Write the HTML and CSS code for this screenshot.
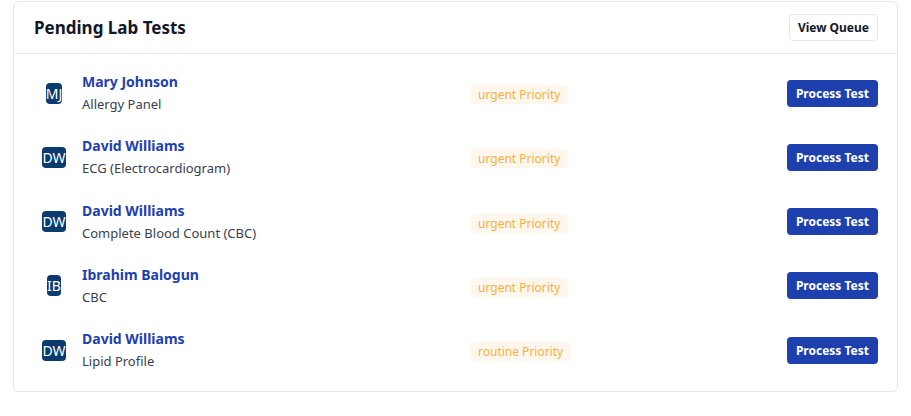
FILE: index.html
```html
<!DOCTYPE html>
<html>
<head>
<meta charset="utf-8">
<link rel="stylesheet" href="styles.css">
</head>
<body>
<div class="card">
  <div class="card-header">
    <h2 class="title">Pending Lab Tests</h2>
    <button class="btn-outline">View Queue</button>
  </div>
  <div class="list">
    <div class="row">
      <div class="avatar-cell"><span class="avatar">MJ</span></div>
      <div class="info">
        <div class="name">Mary Johnson</div>
        <div class="test">Allergy Panel</div>
      </div>
      <div class="badge-cell"><span class="badge">urgent Priority</span></div>
      <button class="btn-primary">Process Test</button>
    </div>
    <div class="row">
      <div class="avatar-cell"><span class="avatar">DW</span></div>
      <div class="info">
        <div class="name">David Williams</div>
        <div class="test">ECG (Electrocardiogram)</div>
      </div>
      <div class="badge-cell"><span class="badge">urgent Priority</span></div>
      <button class="btn-primary">Process Test</button>
    </div>
    <div class="row">
      <div class="avatar-cell"><span class="avatar">DW</span></div>
      <div class="info">
        <div class="name">David Williams</div>
        <div class="test">Complete Blood Count (CBC)</div>
      </div>
      <div class="badge-cell"><span class="badge">urgent Priority</span></div>
      <button class="btn-primary">Process Test</button>
    </div>
    <div class="row">
      <div class="avatar-cell"><span class="avatar">IB</span></div>
      <div class="info">
        <div class="name">Ibrahim Balogun</div>
        <div class="test">CBC</div>
      </div>
      <div class="badge-cell"><span class="badge">urgent Priority</span></div>
      <button class="btn-primary">Process Test</button>
    </div>
    <div class="row">
      <div class="avatar-cell"><span class="avatar">DW</span></div>
      <div class="info">
        <div class="name">David Williams</div>
        <div class="test">Lipid Profile</div>
      </div>
      <div class="badge-cell"><span class="badge">routine Priority</span></div>
      <button class="btn-primary">Process Test</button>
    </div>
  </div>
</div>
</body>
</html>
```
FILE: styles.css
```css
* { box-sizing: border-box; }
body {
  margin: 0;
  padding: 1px 13px 0 13px;
  background: #ffffff;
  font-family: "Noto Sans", sans-serif;
  width: 911px;
}
.card {
  width: 885px;
  border: 1px solid #e5e7eb;
  border-radius: 6px;
  background: #fff;
  box-shadow: 0 1px 2px rgba(0,0,0,0.04);
}
.card-header {
  height: 52px;
  display: flex;
  align-items: center;
  justify-content: space-between;
  padding: 0 19px 0 20px;
  border-bottom: 1px solid #e5e7eb;
}
.title {
  margin: 0 0 1px 0;
  font-size: 17px;
  font-weight: 700;
  color: #111827;
}
.btn-outline {
  font-family: inherit;
  font-size: 12px;
  font-weight: 700;
  color: #111827;
  background: #fff;
  border: 1px solid #e5e7eb;
  border-radius: 4px;
  height: 27px;
  padding: 0 8px;
}
.list {
  padding: 7px 19px 9px 20px;
}
.row {
  display: grid;
  grid-template-columns: 40px 396px 1fr auto;
  align-items: center;
  height: 64.25px;
}
.avatar-cell {
  display: flex;
  justify-content: center;
}
.avatar {
  display: inline-block;
  background: #0b3b6e;
  color: #fff;
  font-size: 14px;
  line-height: 21px;
  border-radius: 4px;
}
.info {
  padding-left: 8px;
}
.name {
  font-size: 14px;
  font-weight: 700;
  color: #1e40af;
  line-height: 20px;
}
.test {
  font-size: 13px;
  color: #374151;
  line-height: 20px;
  margin-top: 2px;
}
.badge {
  display: inline-block;
  background: #fff7ed;
  color: #f7b03c;
  font-size: 12px;
  line-height: 19px;
  padding: 0 8px;
  border-radius: 4px;
}
.btn-primary {
  font-family: inherit;
  font-size: 12px;
  font-weight: 700;
  color: #fff;
  background: #1e40af;
  border: none;
  border-radius: 4px;
  height: 27px;
  padding: 0 9px;
}
```
